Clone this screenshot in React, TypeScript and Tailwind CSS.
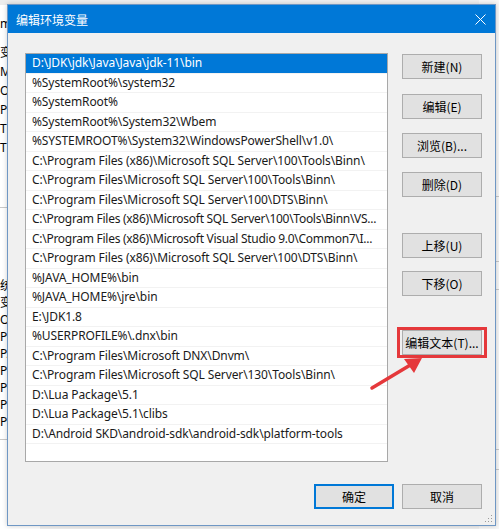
import React from "react";

const rows = [
  "D:\\JDK\\jdk\\Java\\Java\\jdk-11\\bin",
  "%SystemRoot%\\system32",
  "%SystemRoot%",
  "%SystemRoot%\\System32\\Wbem",
  "%SYSTEMROOT%\\System32\\WindowsPowerShell\\v1.0\\",
  "C:\\Program Files (x86)\\Microsoft SQL Server\\100\\Tools\\Binn\\",
  "C:\\Program Files\\Microsoft SQL Server\\100\\Tools\\Binn\\",
  "C:\\Program Files\\Microsoft SQL Server\\100\\DTS\\Binn\\",
  "C:\\Program Files (x86)\\Microsoft SQL Server\\100\\Tools\\Binn\\VS...",
  "C:\\Program Files (x86)\\Microsoft Visual Studio 9.0\\Common7\\I...",
  "C:\\Program Files (x86)\\Microsoft SQL Server\\100\\DTS\\Binn\\",
  "%JAVA_HOME%\\bin",
  "%JAVA_HOME%\\jre\\bin",
  "E:\\JDK1.8",
  "%USERPROFILE%\\.dnx\\bin",
  "C:\\Program Files\\Microsoft DNX\\Dnvm\\",
  "C:\\Program Files\\Microsoft SQL Server\\130\\Tools\\Binn\\",
  "D:\\Lua Package\\5.1",
  "D:\\Lua Package\\5.1\\clibs",
  "D:\\Android SKD\\android-sdk\\android-sdk\\platform-tools",
];

const font = { fontFamily: '"Noto Sans", "Noto Sans CJK SC", sans-serif' };

function Btn({ label, className = "" }: { label: string; className?: string }) {
  return (
    <div
      className={`h-[25px] w-[80px] flex items-center justify-center bg-[#e1e1e1] border border-[#adadad] text-[12px] text-black ${className}`}
    >
      {label}
    </div>
  );
}

export default function App() {
  const bgTop = ["变", "M", "O", "Pa", "TE", "TN"];
  const bgBottom = ["统", "变", "O", "Pa", "PA", "PF", "PF", "PF", "PF"];
  return (
    <div className="relative w-[499px] h-[529px] overflow-hidden bg-[#f0f0f0]" style={font}>
      {/* background desktop windows */}
      <div className="flex h-full">
        <div className="w-[40px] h-full bg-white flex flex-col text-[12px] text-black">
          <div className="h-[5px] bg-[#ececec]" />
          <div className="h-[10px]" />
          <div className="h-[18px] leading-[18px]">m</div>
          <div className="h-[10px]" />
          {bgTop.map((t, i) => (
            <div key={i} className="h-[19px] leading-[19px]">{t}</div>
          ))}
          <div className="h-[50px]" />
          <div className="h-px bg-[#c8c8c8]" />
          <div className="h-[69px]" />
          {bgBottom.map((t, i) => (
            <div key={i} className="h-[17px] leading-[17px]">{t}</div>
          ))}
          <div className="h-[9px]" />
          <div className="h-px bg-[#c8c8c8]" />
        </div>
        <div className="flex-1" />
        <div className="w-[20px] h-full bg-[#f7f7f7] flex flex-col">
          <div className="h-[196px]" />
          <div className="h-px bg-[#c8c8c8]" />
          <div className="h-[64px]" />
          <div className="h-px bg-[#c8c8c8]" />
          <div className="h-[27px]" />
          <div className="h-px bg-[#c8c8c8]" />
          <div className="h-[159px]" />
          <div className="h-px bg-[#c8c8c8]" />
          <div className="h-[19px]" />
          <div className="h-px bg-[#c8c8c8]" />
        </div>
      </div>

      {/* dialog window */}
      <div className="absolute left-[7px] top-[4px] w-[489px] h-[522px] border border-[#6f97c4] bg-[#f0f0f0] flex flex-col shadow-[0_0_5px_rgba(0,0,0,0.2)]">
        <div className="h-[28px] bg-[#0078d7] flex items-center pl-[8px] pr-[9px] pt-[2px] text-white text-[12px]">
          <span style={{ fontFamily: '"Noto Sans CJK SC", sans-serif' }}>编辑环境变量</span>
          <svg className="ml-auto -mt-[2px]" width="11" height="11" viewBox="0 0 11 11">
            <path d="M0.5 0.5 L10.5 10.5 M10.5 0.5 L0.5 10.5" stroke="white" strokeWidth="1" />
          </svg>
        </div>
        <div className="flex pl-[17px] pt-[20px]">
          <div className="w-[363px] h-[409px] border border-[#a8a8a8] bg-white flex flex-col overflow-hidden">
            {rows.map((r, i) => (
              <div
                key={i}
                className={`h-[19.5px] shrink-0 flex items-center pl-[6px] text-[12px] whitespace-nowrap overflow-hidden border-b border-[#f2f2f2] ${
                  i === 8 || i === 9 ? "tracking-[-0.28px]" : "tracking-[-0.1px]"
                } ${i === 0 ? "bg-[#0078d7] text-white" : "text-[#1a1a1a]"}`}
              >
                {r}
              </div>
            ))}
          </div>
          <div className="ml-[14px] flex flex-col" style={{ fontFamily: '"Noto Sans CJK SC", sans-serif' }}>
            <Btn label="新建(N)" className="mt-[1px]" />
            <Btn label="编辑(E)" className="mt-[15px]" />
            <Btn label="浏览(B)..." className="mt-[14px]" />
            <Btn label="删除(D)" className="mt-[14px]" />
            <Btn label="上移(U)" className="mt-[36px]" />
            <Btn label="下移(O)" className="mt-[13px]" />
            <Btn label="编辑文本(T)..." className="mt-[34px]" />
          </div>
        </div>
        <div className="flex justify-end gap-[8px] pr-[13px] mt-[22px]" style={{ fontFamily: '"Noto Sans CJK SC", sans-serif' }}>
          <Btn label="确定" className="!border-[#0078d7] shadow-[inset_0_0_0_1px_#0078d7]" />
          <Btn label="取消" />
        </div>
        <div className="flex-1" />
        <div className="flex justify-end pr-[2px] pb-[2px]">
          <svg width="8" height="8" viewBox="0 0 8 8">
            <rect x="6" y="0" width="1" height="1" fill="#9a9a9a" />
            <rect x="3" y="3" width="1" height="1" fill="#9a9a9a" />
            <rect x="6" y="3" width="1" height="1" fill="#9a9a9a" />
            <rect x="0" y="6" width="1" height="1" fill="#9a9a9a" />
            <rect x="3" y="6" width="1" height="1" fill="#9a9a9a" />
            <rect x="6" y="6" width="1" height="1" fill="#9a9a9a" />
          </svg>
        </div>
      </div>

      {/* annotation: red box and arrow */}
      <div className="absolute left-[397px] top-[327px] w-[90px] h-[31px] border-[3px] border-[#e5383b]" />
      <svg className="absolute left-0 top-0" width="499" height="529" viewBox="0 0 499 529">
        <line x1="372" y1="388" x2="412" y2="364" stroke="#e5383b" strokeWidth="3.5" strokeLinecap="round" />
        <polygon points="422,358 404,359 414,373" fill="#e5383b" />
      </svg>
    </div>
  );
}
